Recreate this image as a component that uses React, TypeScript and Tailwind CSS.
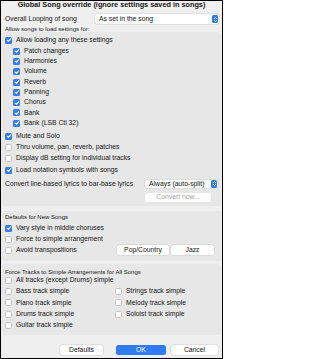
import React from "react";

const Check: React.FC<{ on?: boolean }> = ({ on }) =>
  on ? (
    <span className="flex h-[7px] w-[7px] shrink-0 items-center justify-center rounded-[1.5px] bg-[#2f7cf5]">
      <svg viewBox="0 0 8 8" className="h-[6px] w-[6px]">
        <path d="M1.7 4.3 L3.3 5.9 L6.3 2.1" stroke="white" strokeWidth="1.4" fill="none" strokeLinecap="round" strokeLinejoin="round" />
      </svg>
    </span>
  ) : (
    <span className="h-[7px] w-[7px] shrink-0 rounded-[1.5px] border-[0.5px] border-[#c4c4c4] bg-white" />
  );

const Row: React.FC<{ on?: boolean; label: string; h: string; indent?: boolean }> = ({ on, label, h, indent }) => (
  <div className={`flex items-center gap-[4px] ${h} ${indent ? "pl-[8px]" : ""}`}>
    <Check on={on} />
    <span className="whitespace-nowrap">{label}</span>
  </div>
);

const Arrows: React.FC = () => (
  <span className="flex h-[8px] w-[6px] items-center justify-center rounded-[1.5px] bg-[#2f7cf5]">
    <svg viewBox="0 0 6 8" className="h-[7px] w-[5px]">
      <path d="M1.5 3 L3 1.6 L4.5 3 M1.5 5 L3 6.4 L4.5 5" stroke="white" strokeWidth="0.9" fill="none" strokeLinecap="round" strokeLinejoin="round" />
    </svg>
  </span>
);

const Select: React.FC<{ value: string; className: string }> = ({ value, className }) => (
  <div className={`flex items-center justify-between rounded-[2px] bg-white pl-[4px] pr-[1px] shadow-[0_0_0_0.5px_#cfcfcf] ${className}`}>
    <span className="whitespace-nowrap">{value}</span>
    <Arrows />
  </div>
);

const Btn: React.FC<{ label: string; className: string; primary?: boolean; dim?: boolean }> = ({ label, className, primary, dim }) => (
  <div
    className={`flex items-center justify-center rounded-[2.5px] whitespace-nowrap ${
      primary ? "bg-[#2f7cf5] text-white" : "bg-white shadow-[0_0_0_0.5px_#d0d0d0]"
    } ${dim ? "text-[#a8a8a8]" : ""} ${className}`}
  >
    {label}
  </div>
);

export default function App() {
  return (
    <div
      className="h-[359px] w-[223px] overflow-hidden border border-black bg-[#efefef] text-[6.8px] leading-none text-[#141414]"
      style={{ fontFamily: '"Liberation Sans", Arial, sans-serif' }}
    >
      {/* title */}
      <div className="flex h-[8px] items-center justify-center whitespace-nowrap text-[7.3px] font-bold">
        Global Song override (ignore settings saved in songs)
      </div>

      <div className="mt-[4px] flex h-[12px] items-center pl-[4px] pr-[3px]">
        <span className="w-[90px]">Overall Looping of song</span>
        <Select value="As set in the song" className="h-[10px] flex-1" />
      </div>

      <div className="flex h-[7px] items-center pl-[4px] text-[6px]">Allow songs to load settings for:</div>

      {/* group 1 */}
      <div className="mx-[1px] h-[174px] rounded-[3px] bg-[#e7e7e7] px-[3px] pt-[3px]">
        <Row on label="Allow loading any these settings" h="h-[10px]" />
        <div className="pt-[1px]">
          <Row on indent label="Patch changes" h="h-[10.3px]" />
          <Row on indent label="Harmonies" h="h-[10.3px]" />
          <Row on indent label="Volume" h="h-[10.3px]" />
          <Row on indent label="Reverb" h="h-[10.3px]" />
          <Row on indent label="Panning" h="h-[10.3px]" />
          <Row on indent label="Chorus" h="h-[10.3px]" />
          <Row on indent label="Bank" h="h-[10.3px]" />
          <Row on indent label="Bank (LSB Ctl 32)" h="h-[10.3px]" />
        </div>
        <div className="pt-[2px]">
          <Row on label="Mute and Solo" h="h-[11.4px]" />
          <Row label="Thru volume, pan, reverb, patches" h="h-[11.4px]" />
          <Row label="Display dB setting for individual tracks" h="h-[11.4px]" />
          <Row on label="Load notation symbols with songs" h="h-[11.4px]" />
        </div>
        <div className="mt-[3px] flex h-[10px] items-center">
          <span className="w-[140px] whitespace-nowrap">Convert line-based lyrics to bar-base lyrics</span>
          <Select value="Always (auto-split)" className="h-[8.5px] flex-1" />
        </div>
        <div className="mt-[4px] flex pl-[140px] pr-[7px]">
          <Btn label="Convert now..." dim className="h-[9px] flex-1 bg-[#f3f3f3] shadow-none" />
        </div>
      </div>

      {/* group 2 */}
      <div className="mx-[1px] mt-[5px] h-[50px] rounded-[3px] bg-[#e7e7e7] px-[3px] pt-[2.5px]">
        <div className="flex h-[7px] items-center text-[6px]">Defaults for New Songs</div>
        <div className="pt-[2px]">
          <Row on label="Vary style in middle choruses" h="h-[11px]" />
          <Row label="Force to simple arrangement" h="h-[11px]" />
          <div className="flex h-[11px] items-center">
            <div className="w-[112px]">
              <Row label="Avoid transpositions" h="h-[11px]" />
            </div>
            <Btn label="Pop/Country" className="h-[9.5px] w-[52px]" />
            <Btn label="Jazz" className="ml-[2px] h-[9.5px] w-[43px]" />
          </div>
        </div>
      </div>

      {/* group 3 */}
      <div className="mx-[1px] mt-[3px] h-[71px] rounded-[3px] bg-[#e7e7e7] px-[3px] pt-[4px]">
        <div className="flex h-[7px] items-center text-[6px]">Force Tracks to Simple Arrangements for All Songs</div>
        <Row label="All tracks (except Drums) simple" h="h-[11.2px]" />
        <div className="grid grid-cols-[110px_1fr]">
          <Row label="Bass track simple" h="h-[11.2px]" />
          <Row label="Strings track simple" h="h-[11.2px]" />
          <Row label="Piano track simple" h="h-[11.2px]" />
          <Row label="Melody track simple" h="h-[11.2px]" />
          <Row label="Drums track simple" h="h-[11.2px]" />
          <Row label="Soloist track simple" h="h-[11.2px]" />
          <Row label="Guitar track simple" h="h-[11.2px]" />
        </div>
      </div>

      {/* buttons */}
      <div className="mt-[10px] flex h-[10px] items-center pl-[59px]">
        <Btn label="Defaults" className="h-[10px] w-[43px]" />
        <Btn label="OK" primary className="ml-[13px] h-[10px] w-[50px]" />
        <Btn label="Cancel" className="ml-[5px] h-[10px] w-[47px]" />
      </div>
    </div>
  );
}
